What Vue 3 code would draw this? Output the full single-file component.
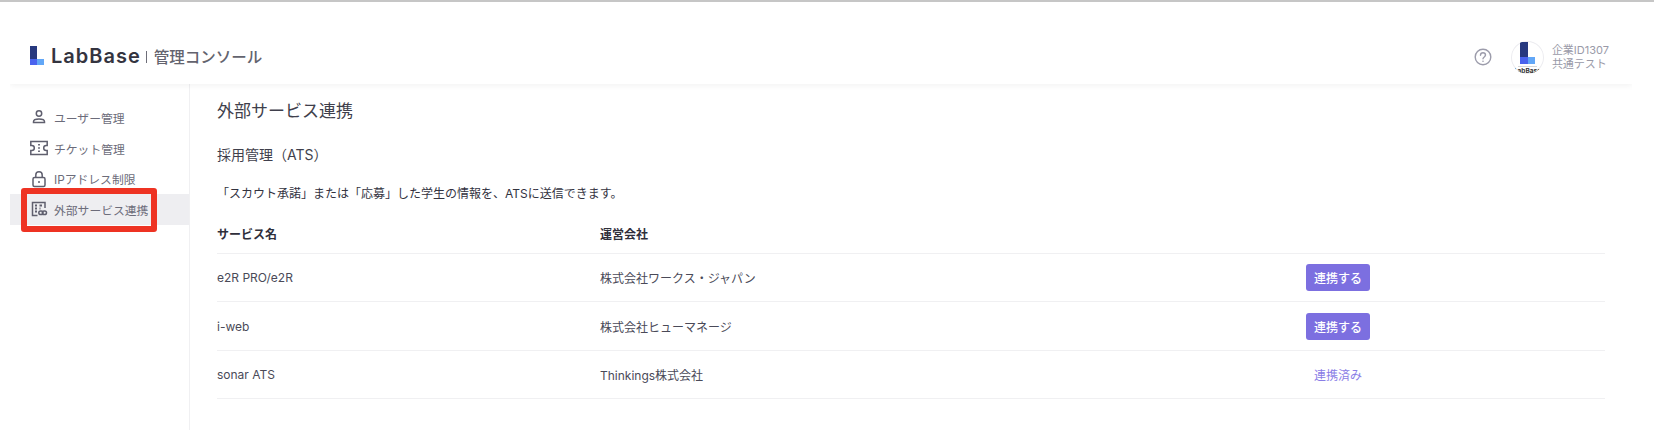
<template>
  <div class="page">
    <header class="header">
      <div class="brand">
        <svg class="logo" width="15" height="20" viewBox="0 0 15 20">
          <rect x="0" y="0" width="7" height="19" fill="#27397f" />
          <rect x="0" y="13" width="14" height="6" fill="#62a7f7" />
          <rect x="0" y="13" width="7" height="6" fill="#4a63ee" />
        </svg>
        <span class="brand-name">LabBase</span>
        <span class="brand-sep"></span>
        <span class="brand-sub">管理コンソール</span>
      </div>
      <div class="account">
        <svg class="help" width="18" height="18" viewBox="0 0 18 18" fill="none" stroke="#9c9cab" stroke-width="1.4">
          <circle cx="9" cy="9" r="7.8" />
          <path d="M6.500 7.200c0-1.400 1.100-2.400 2.500-2.400s2.500 1 2.500 2.300c0 1.900-2.500 1.800-2.500 3.700" stroke-linecap="round" />
          <circle cx="9" cy="13.200" r=".8" fill="#9c9cab" stroke="none" />
        </svg>
        <div class="avatar">
          <svg width="33" height="33" viewBox="0 0 33 33">
            <rect x="9" y="1" width="8" height="21" fill="#27397f" />
            <rect x="9" y="16" width="15" height="7" fill="#62a7f7" />
            <rect x="9" y="16" width="8" height="7" fill="#4a63ee" />
            <rect x="7" y="25" width="19" height="1" fill="#d8d8d8" />
            <text x="16.500" y="32" text-anchor="middle" class="avatar-text">LabBase</text>
          </svg>
        </div>
        <div class="account-text">
          <div>企業ID1307</div>
          <div>共通テスト</div>
        </div>
      </div>
    </header>

    <div class="body">
      <aside class="sidebar">
        <a v-for="item in navItems" :key="item.label" class="nav-item" :class="{ active: item.active }">
          <svg class="nav-icon" width="18" height="18" viewBox="0 0 18 18" fill="none" stroke="#5f5f6e" stroke-width="1.5" v-html="item.icon"></svg>
          <span>{{ item.label }}</span>
          <span v-if="item.active" class="highlight"></span>
        </a>
      </aside>

      <main class="content">
        <h1 class="title">外部サービス連携</h1>
        <h2 class="subtitle">採用管理（ATS）</h2>
        <p class="desc">「スカウト承諾」または「応募」した学生の情報を、ATSに送信できます。</p>
        <div class="table">
          <div class="row head">
            <div class="col-name">サービス名</div>
            <div class="col-company">運営会社</div>
            <div class="col-action"></div>
          </div>
          <div v-for="s in services" :key="s.name" class="row">
            <div class="col-name">{{ s.name }}</div>
            <div class="col-company">{{ s.company }}</div>
            <div class="col-action">
              <span v-if="s.linked" class="linked">連携済み</span>
              <button v-else class="link-btn">連携する</button>
            </div>
          </div>
        </div>
      </main>
    </div>
  </div>
</template>

<script setup>
const navItems = [
  {
    label: "ユーザー管理",
    icon: '<circle cx="9" cy="5.500" r="2.700"/><path d="M3.500 14.500v-.8c0-1.700 2.400-2.700 5.500-2.700s5.500 1 5.500 2.700v.8z"/>',
  },
  {
    label: "チケット管理",
    icon: '<path d="M.8 2.500h16.400v4h-1a2.500 2.500 0 0 0 0 5h1v4H.8v-4h1a2.500 2.500 0 0 0 0-5h-1z"/><path d="M9 5v1.600M9 8.200v1.600M9 11.400V13" stroke-width="1.800"/>',
  },
  {
    label: "IPアドレス制限",
    icon: '<rect x="3" y="7.500" width="12" height="9" rx="1.500"/><path d="M5.800 7.500V5a3.200 3.200 0 0 1 6.400 0v2.500"/><circle cx="9" cy="12" r="1" fill="#5f5f6e" stroke="none"/>',
  },
  {
    label: "外部サービス連携",
    active: true,
    icon: '<path d="M7.500 15.500H2.500v-13h12.500V8"/><path d="M5 5.500h2M9.500 5.500h2.500M5 8.500h2M9.500 8.500h1M5 11.500h2" stroke-width="1.800"/><rect x="8.800" y="11" width="4.200" height="3.600" rx="1.800"/><rect x="12.300" y="11" width="4.200" height="3.600" rx="1.800"/>',
  },
];

const services = [
  { name: "e2R PRO/e2R", company: "株式会社ワークス・ジャパン" },
  { name: "i-web", company: "株式会社ヒューマネージ" },
  { name: "sonar ATS", company: "Thinkings株式会社", linked: true },
];
</script>

<style>
html,
body {
  margin: 0;
  background: #fff;
}
</style>

<style scoped>
.page {
  width: 1654px;
  height: 448px;
  overflow: hidden;
  border-top: 2px solid #c6c6c6;
  box-sizing: border-box;
  padding: 0 22px 0 10px;
  font-family: Inter, "Noto Sans CJK JP", sans-serif;
  color: #3a3a48;
}

.header {
  height: 82px;
  padding: 28px 23px 0 20px;
  box-sizing: border-box;
  display: flex;
  align-items: center;
  justify-content: space-between;
  box-shadow: 0 2px 6px rgba(0, 0, 0, 0.05);
  clip-path: inset(0 0 -10px 0);
}

.brand {
  display: flex;
  align-items: center;
  margin-bottom: 2px;
}

.logo {
  margin-right: 6px;
}

.brand-name {
  font-size: 20px;
  font-weight: 600;
  letter-spacing: 1px;
  color: #34343f;
}

.brand-sep {
  width: 1px;
  height: 12px;
  background: #6d6d78;
  margin: 2px 7px 0 5px;
}

.brand-sub {
  font-size: 15.500px;
  font-weight: 500;
  color: #63636e;
}

.account {
  display: flex;
  align-items: center;
}

.help {
  margin-right: 19px;
}

.avatar {
  width: 33px;
  height: 33px;
  border-radius: 50%;
  box-shadow: inset 0 0 0 1px #ececf0;
  overflow: hidden;
  margin-right: 8px;
}

.avatar svg {
  display: block;
}

.avatar-text {
  font-size: 6.500px;
  font-weight: 700;
  fill: #333;
}

.account-text {
  font-size: 11px;
  line-height: 14px;
  color: #9a9aa8;
}

.body {
  display: flex;
}

.sidebar {
  width: 180px;
  height: 346px;
  box-sizing: border-box;
  padding-top: 18px;
  border-right: 1px solid #f0f0f2;
  flex-shrink: 0;
}

.nav-item {
  position: relative;
  display: flex;
  align-items: center;
  height: 30.700px;
  padding-left: 20px;
  font-size: 11.800px;
  color: #6c6c7a;
}

.nav-item.active {
  background: #eeeef1;
}

.nav-icon {
  width: 18px;
  margin-right: 6px;
  flex-shrink: 0;
}

.highlight {
  position: absolute;
  left: 11px;
  top: -6px;
  width: 136px;
  height: 44px;
  box-sizing: border-box;
  border: 6px solid #ee3323;
  border-radius: 3px;
  pointer-events: none;
}

.content {
  flex: 1;
  padding-left: 27px;
}

.title {
  margin: 15px 0 0;
  font-size: 17px;
  line-height: 24px;
  font-weight: 400;
  color: #3f3f4c;
}

.subtitle {
  margin: 22px 0 0;
  font-size: 14px;
  line-height: 20px;
  font-weight: 400;
  color: #3f3f4c;
}

.desc {
  margin: 21px 0 0;
  font-size: 12px;
  line-height: 16px;
  color: #33333f;
}

.table {
  margin-top: 12px;
  width: 1388px;
}

.row {
  display: flex;
  align-items: center;
  height: 48.400px;
  border-bottom: 1px solid #f0f0f2;
  box-sizing: border-box;
  font-size: 12px;
  color: #4a4a58;
}

.row.head {
  height: 40px;
  font-weight: 700;
  color: #2f2f3b;
}

.col-name {
  width: 383px;
}

.col-company {
  width: 706px;
}

.col-action {
  width: 64px;
  display: flex;
  justify-content: center;
}

.link-btn {
  width: 64px;
  height: 27px;
  padding: 0;
  border: none;
  border-radius: 3px;
  background: #7c6fe0;
  color: #fff;
  font: 500 12px Inter, "Noto Sans CJK JP", sans-serif;
}

.linked {
  font-size: 12px;
  color: #8a7de6;
}
</style>
